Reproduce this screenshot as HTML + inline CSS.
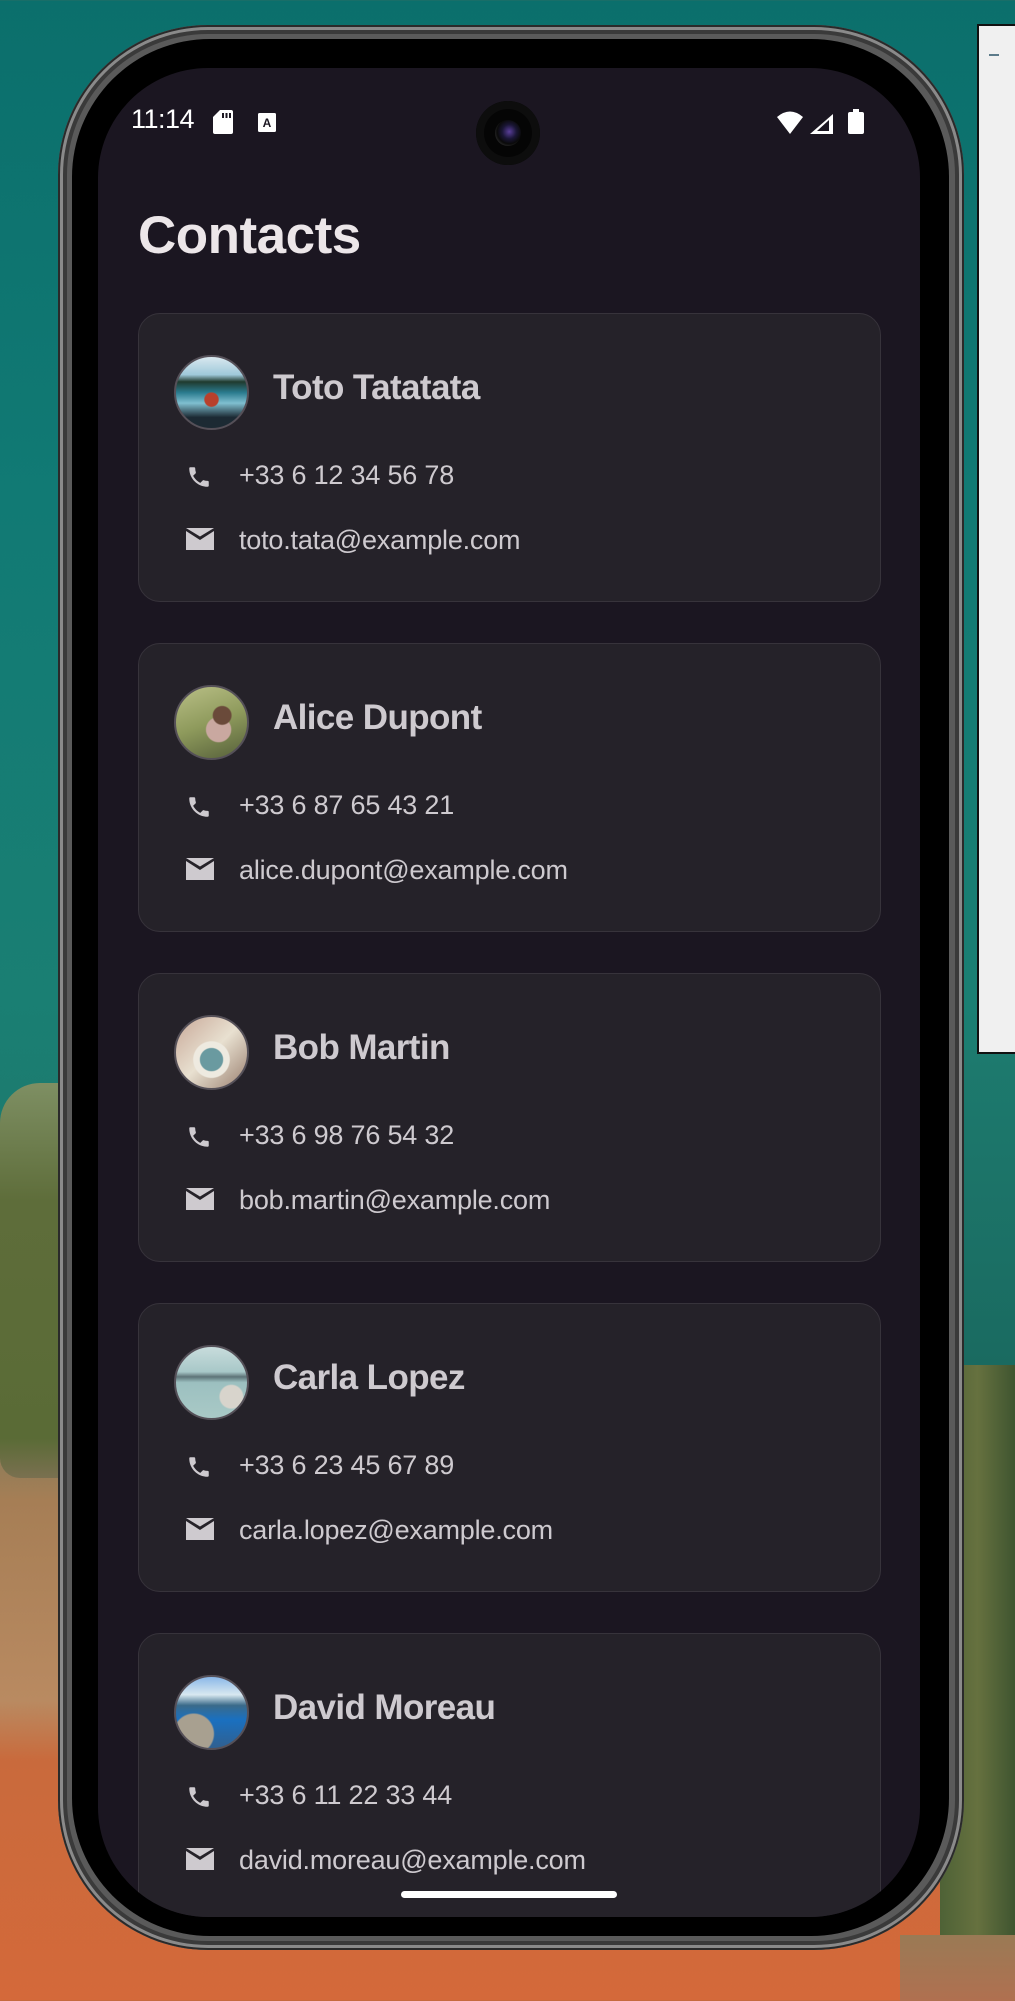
<!DOCTYPE html>
<html><head><meta charset="utf-8"><style>
*{margin:0;padding:0;box-sizing:border-box}
html,body{width:1015px;height:2001px;overflow:hidden}
body{position:relative;font-family:"Liberation Sans",sans-serif;
background:linear-gradient(180deg,#0b6f6c 0%,#117a74 25%,#1a7f73 50%,#1d7a6e 58%,#1e7468 62%,#a67e55 75%,#b98a61 85%,#c96a3c 88%,#d4693a 100%);}
.rteal{position:absolute;left:940px;top:1050px;width:75px;height:320px;background:linear-gradient(180deg,#1d7a6e,#1a6a60)}
.rtrees{position:absolute;left:940px;top:1365px;width:75px;height:580px;background:linear-gradient(90deg,#4e6236,#66713f,#3f5530);}
.rsand{position:absolute;left:900px;top:1935px;width:115px;height:66px;background:linear-gradient(180deg,#9a7a55,#b07050);}
.ltrees{position:absolute;left:0;top:1083px;width:70px;height:395px;background:linear-gradient(180deg,#7e8f63,#5e6d3a 30%,#5a6b36 90%,#7a7050);border-radius:40px 0 0 20px}
.panel{position:absolute;left:977px;top:24px;width:40px;height:1030px;background:#f0f0f0;border:2px solid #111;border-right:none}
.panel i{position:absolute;left:10px;top:28px;width:10px;height:2px;background:#5c7b8a}
.phone{position:absolute;left:58px;top:25px;width:906px;height:1925px;border-radius:150px;background:#5a5a5a;box-shadow:inset 0 0 0 2px #2a2a2a,inset 0 0 0 5px #8a8a8a,inset 0 0 0 9px #3a3a3a}
.bezel{position:absolute;left:72px;top:39px;width:877px;height:1897px;border-radius:138px;background:#000}
.screen{position:absolute;left:98px;top:68px;width:822px;height:1849px;border-radius:110px;background:#1b1621;overflow:hidden}
.cam{position:absolute;left:476px;top:101px;width:64px;height:64px;border-radius:50%;background:#050505;box-shadow:inset 0 0 0 8px #0d0d0d}
.cam:after{content:"";position:absolute;left:19px;top:19px;width:26px;height:26px;border-radius:50%;background:radial-gradient(circle at 55% 45%,#5a3f9a 0,#1a1636 35%,#0a0a0a 60%,#333 80%,#111 100%)}
.st{position:absolute;color:#fff;font-size:27px;top:104px;left:131px;letter-spacing:-0.5px}
h1{position:absolute;left:40px;top:137px;font-size:53px;font-weight:bold;color:#ece6e9;letter-spacing:-0.5px}
.card{position:absolute;left:40px;width:743px;height:289px;border-radius:22px;background:#252229;border:1.5px solid #37333b}
.av{position:absolute;left:35px;top:41px;width:75px;height:75px;border-radius:50%;border:2px solid #555058}
.name{position:absolute;left:134px;top:54px;font-size:35px;font-weight:bold;color:#cecacf;letter-spacing:-0.6px}
.row{position:absolute;left:100px;font-size:27px;color:#cecacf;white-space:nowrap;letter-spacing:-0.2px}
.ic{position:absolute;left:47px}
.home{position:absolute;left:401px;top:1891px;width:216px;height:7px;border-radius:4px;background:#fff}
</style></head><body>
<div class="ltrees"></div><div class="rteal"></div><div class="rtrees"></div><div class="rsand"></div>
<div class="panel"><i></i></div>
<div class="phone"></div>
<div class="bezel"></div>
<div class="screen">
<h1>Contacts</h1>

<div class="card" style="top:245px"><div class="av" style="background:radial-gradient(circle at 50% 60%,#b9402c 0 12%,transparent 14%),linear-gradient(180deg,#d9e8ef 0,#9fc9da 25%,#1f3a2e 35%,#2a7b8e 50%,#7fbfd0 65%,#1c2a33 85%)"></div><div class="name">Toto Tatatata</div>
<svg class="ic" style="top:150px" width="26" height="26" viewBox="0 0 24 24"><path d="M6.6 10.8c1.4 2.8 3.8 5.1 6.6 6.6l2.2-2.2c.3-.3.7-.4 1-.2 1.1.4 2.3.6 3.6.6.6 0 1 .4 1 1V20c0 .6-.4 1-1 1C10.6 21 3 13.4 3 4c0-.6.4-1 1-1h3.5c.6 0 1 .4 1 1 0 1.3.2 2.5.6 3.6.1.3 0 .7-.2 1z" fill="#cecacf"/></svg>
<div class="row" style="top:146px">+33 6 12 34 56 78</div>
<svg class="ic" style="top:214px" width="28" height="22" viewBox="0 0 28 22"><path d="M0 0H28V22H0z" fill="#cecacf"/><path d="M0 3L14 12L28 3V0L14 8.5L0 0z" fill="#252229"/></svg>
<div class="row" style="top:211px">toto.tata@example.com</div></div>

<div class="card" style="top:575px"><div class="av" style="background:radial-gradient(circle at 65% 40%,#6a4a3a 0 14%,transparent 16%),radial-gradient(circle at 60% 60%,#c9a8a0 0 20%,transparent 22%),linear-gradient(160deg,#b9bf86,#8e9a5c 50%,#56603a)"></div><div class="name">Alice Dupont</div>
<svg class="ic" style="top:150px" width="26" height="26" viewBox="0 0 24 24"><path d="M6.6 10.8c1.4 2.8 3.8 5.1 6.6 6.6l2.2-2.2c.3-.3.7-.4 1-.2 1.1.4 2.3.6 3.6.6.6 0 1 .4 1 1V20c0 .6-.4 1-1 1C10.6 21 3 13.4 3 4c0-.6.4-1 1-1h3.5c.6 0 1 .4 1 1 0 1.3.2 2.5.6 3.6.1.3 0 .7-.2 1z" fill="#cecacf"/></svg>
<div class="row" style="top:146px">+33 6 87 65 43 21</div>
<svg class="ic" style="top:214px" width="28" height="22" viewBox="0 0 28 22"><path d="M0 0H28V22H0z" fill="#cecacf"/><path d="M0 3L14 12L28 3V0L14 8.5L0 0z" fill="#252229"/></svg>
<div class="row" style="top:211px">alice.dupont@example.com</div></div>

<div class="card" style="top:905px"><div class="av" style="background:radial-gradient(circle at 50% 60%,#6a9aa0 0 20%,#eeeae0 22% 32%,transparent 34%),linear-gradient(135deg,#c8a898,#e8e0d0 50%,#9a8070)"></div><div class="name">Bob Martin</div>
<svg class="ic" style="top:150px" width="26" height="26" viewBox="0 0 24 24"><path d="M6.6 10.8c1.4 2.8 3.8 5.1 6.6 6.6l2.2-2.2c.3-.3.7-.4 1-.2 1.1.4 2.3.6 3.6.6.6 0 1 .4 1 1V20c0 .6-.4 1-1 1C10.6 21 3 13.4 3 4c0-.6.4-1 1-1h3.5c.6 0 1 .4 1 1 0 1.3.2 2.5.6 3.6.1.3 0 .7-.2 1z" fill="#cecacf"/></svg>
<div class="row" style="top:146px">+33 6 98 76 54 32</div>
<svg class="ic" style="top:214px" width="28" height="22" viewBox="0 0 28 22"><path d="M0 0H28V22H0z" fill="#cecacf"/><path d="M0 3L14 12L28 3V0L14 8.5L0 0z" fill="#252229"/></svg>
<div class="row" style="top:211px">bob.martin@example.com</div></div>

<div class="card" style="top:1235px"><div class="av" style="background:radial-gradient(circle at 78% 70%,#d8d4cc 0 15%,transparent 17%),linear-gradient(180deg,#c8dcdc,#a8c8c8 35%,#5e7478 42%,#9cc0c0 50%,#a9c9c6)"></div><div class="name">Carla Lopez</div>
<svg class="ic" style="top:150px" width="26" height="26" viewBox="0 0 24 24"><path d="M6.6 10.8c1.4 2.8 3.8 5.1 6.6 6.6l2.2-2.2c.3-.3.7-.4 1-.2 1.1.4 2.3.6 3.6.6.6 0 1 .4 1 1V20c0 .6-.4 1-1 1C10.6 21 3 13.4 3 4c0-.6.4-1 1-1h3.5c.6 0 1 .4 1 1 0 1.3.2 2.5.6 3.6.1.3 0 .7-.2 1z" fill="#cecacf"/></svg>
<div class="row" style="top:146px">+33 6 23 45 67 89</div>
<svg class="ic" style="top:214px" width="28" height="22" viewBox="0 0 28 22"><path d="M0 0H28V22H0z" fill="#cecacf"/><path d="M0 3L14 12L28 3V0L14 8.5L0 0z" fill="#252229"/></svg>
<div class="row" style="top:211px">carla.lopez@example.com</div></div>

<div class="card" style="top:1565px;height:320px"><div class="av" style="background:radial-gradient(circle at 25% 80%,#a8a090 0 25%,transparent 27%),linear-gradient(180deg,#8ab8e8,#d8e8f0 25%,#3a6a8a 40%,#1a70c0 60%,#306090)"></div><div class="name">David Moreau</div>
<svg class="ic" style="top:150px" width="26" height="26" viewBox="0 0 24 24"><path d="M6.6 10.8c1.4 2.8 3.8 5.1 6.6 6.6l2.2-2.2c.3-.3.7-.4 1-.2 1.1.4 2.3.6 3.6.6.6 0 1 .4 1 1V20c0 .6-.4 1-1 1C10.6 21 3 13.4 3 4c0-.6.4-1 1-1h3.5c.6 0 1 .4 1 1 0 1.3.2 2.5.6 3.6.1.3 0 .7-.2 1z" fill="#cecacf"/></svg>
<div class="row" style="top:146px">+33 6 11 22 33 44</div>
<svg class="ic" style="top:214px" width="28" height="22" viewBox="0 0 28 22"><path d="M0 0H28V22H0z" fill="#cecacf"/><path d="M0 3L14 12L28 3V0L14 8.5L0 0z" fill="#252229"/></svg>
<div class="row" style="top:211px">david.moreau@example.com</div></div>
</div>
<div class="cam"></div>
<div class="st">11:14</div>
<svg style="position:absolute;left:213px;top:110px" width="20" height="24" viewBox="0 0 20 24"><path d="M7 0H18a2 2 0 0 1 2 2V22a2 2 0 0 1-2 2H2a2 2 0 0 1-2-2V7z" fill="#fff"/><rect x="9" y="3" width="2" height="5" fill="#1b1621"/><rect x="12.5" y="3" width="2" height="5" fill="#1b1621"/><rect x="16" y="3" width="2" height="5" fill="#1b1621"/></svg>
<svg style="position:absolute;left:258px;top:113px" width="18" height="19" viewBox="0 0 18 19"><rect width="18" height="19" rx="1.5" fill="#fff"/><text x="9" y="14" font-size="12" font-weight="bold" text-anchor="middle" fill="#1b1621" font-family="Liberation Sans">A</text></svg>
<svg style="position:absolute;left:777px;top:109px" width="88" height="26" viewBox="0 0 88 26"><path d="M0 8Q13 -3 26 8L13 25z" fill="#fff"/><path d="M33 25L56 5V25z" fill="#fff"/><path d="M40 22L52 11V22z" fill="#1b1621"/><rect x="71" y="3" width="16" height="22" rx="2" fill="#fff"/><rect x="76" y="0" width="6" height="4" fill="#fff"/></svg>
<div class="home"></div>
</body></html>
